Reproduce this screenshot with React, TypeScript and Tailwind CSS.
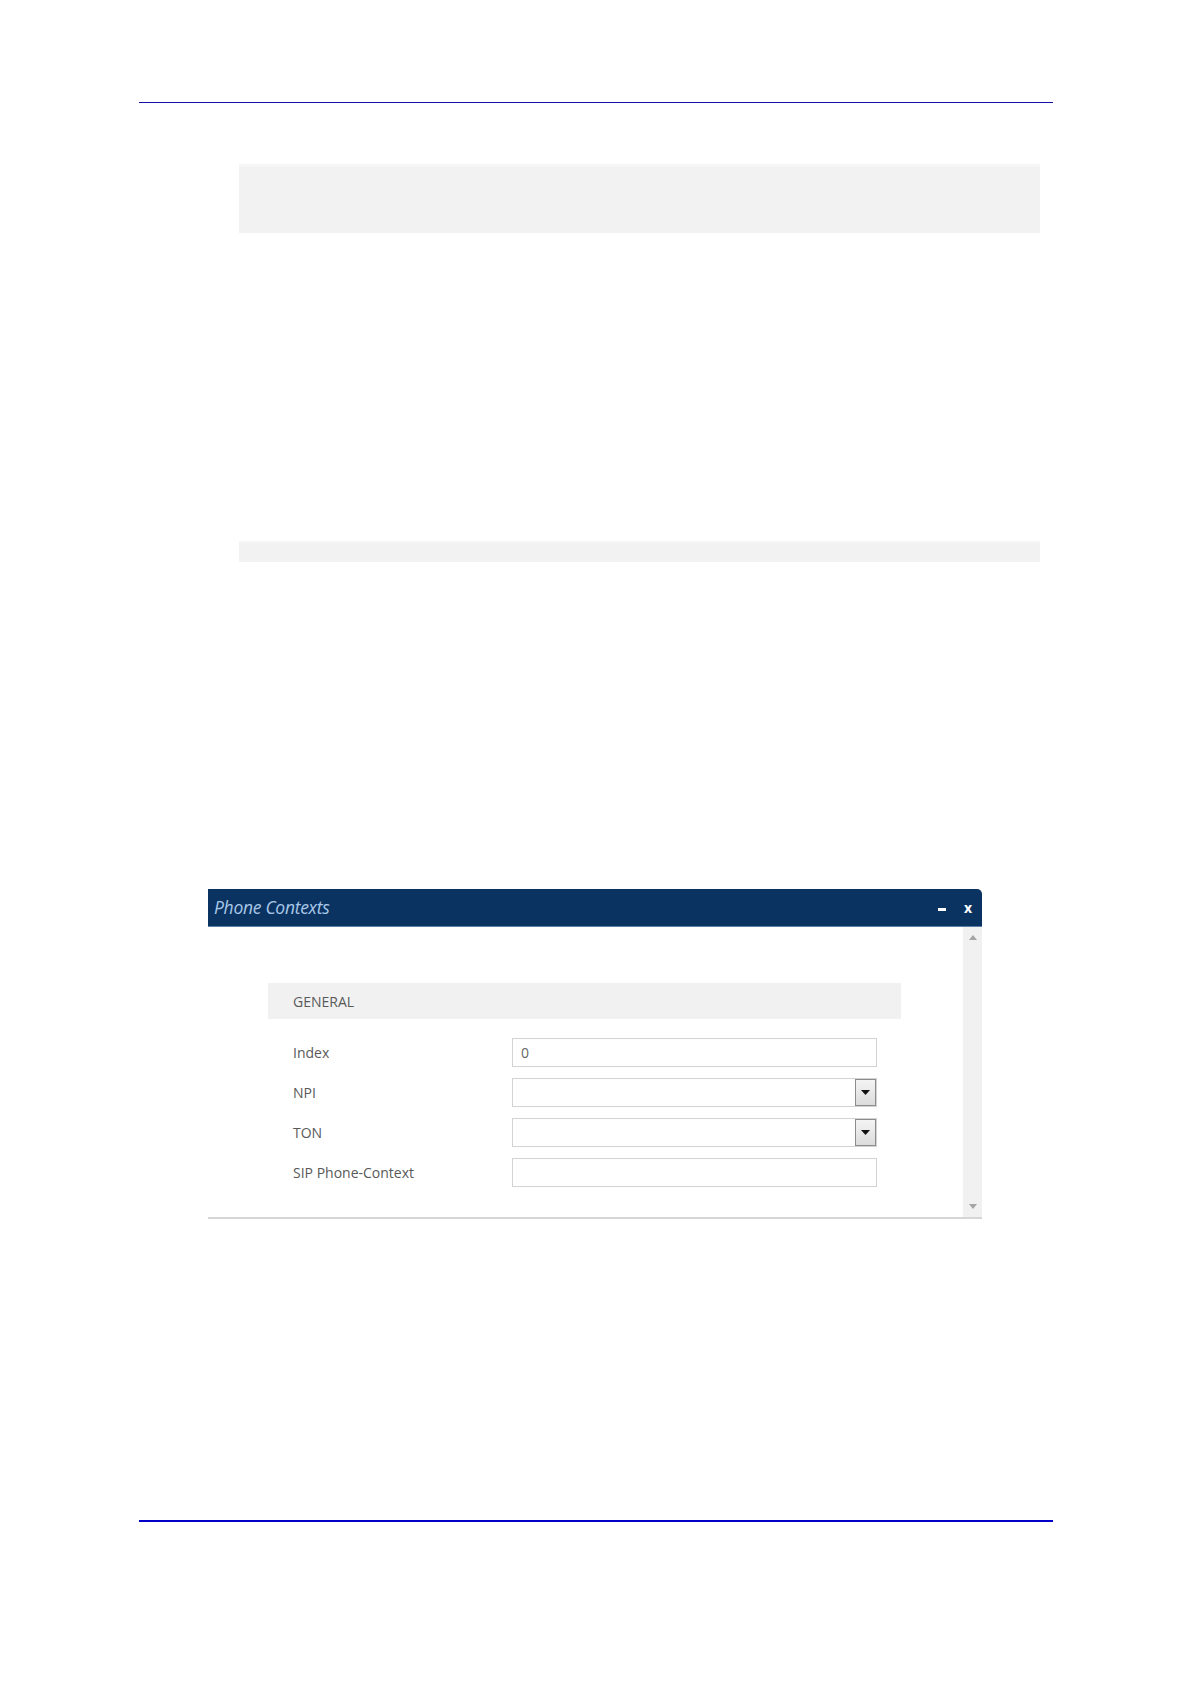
const font = { fontFamily: '"Open Sans", "Noto Sans", sans-serif' }

function Field({ label, value, select }: { label: string; value?: string; select?: boolean }) {
  return (
    <div className="flex items-center h-[29px]">
      <div className="w-[244px] text-[14px] text-[#595959] pl-[25px]">{label}</div>
      <div className="relative w-[365px] h-[29px] border border-[#d3d3d3] bg-white flex items-center">
        <span className="pl-[8px] text-[14px] text-[#666]">{value}</span>
        {select && (
          <div className="absolute right-0 top-0 bottom-0 w-[21px] border border-[#8c8c8c] bg-gradient-to-b from-[#f4f4f4] to-[#dcdcdc] flex items-center justify-center">
            <svg width="9" height="5" viewBox="0 0 9 5">
              <path d="M0 0 H9 L4.5 5 Z" fill="#111" />
            </svg>
          </div>
        )}
      </div>
    </div>
  )
}

export default function App() {
  return (
    <div className="min-h-[1683px] bg-white pt-[102px]" style={font}>
      <div className="ml-[139px] w-[914px]">
        <div className="h-px bg-[#1212a8]" />

        <div className="mt-[61px] ml-[100px] w-[801px] h-[69px] bg-[#f2f2f2] border-t-[3px] border-[#f6f6f6]" />

        <div className="mt-[308px] ml-[100px] w-[801px] h-[21px] bg-[#f2f2f2] border-t-[2px] border-[#f6f6f6]" />

        <div className="mt-[327px] ml-[69px] w-[774px]">
          <div className="h-[38px] bg-[#0b3361] rounded-tr-[5px] border-b border-[#5b7fa6] flex items-center justify-between pl-[6px] pr-[10px]">
            <span className="italic text-[17.5px] text-[#a9c8e8] tracking-[-0.3px]">Phone Contexts</span>
            <div className="flex items-center gap-[18px] text-white font-bold">
              <span className="block w-[8px] h-[3px] bg-white mt-[4px]" />
              <span className="text-[14px] leading-none">x</span>
            </div>
          </div>
          <div className="flex border-b-2 border-[#d6d6d6]">
            <div className="flex-1 pt-[56px] pb-[30px] pl-[60px]">
              <div className="w-[633px] h-[36px] bg-[#f1f1f1] flex items-center pl-[25px] text-[14px] text-[#595959]">
                GENERAL
              </div>
              <div className="mt-[19px] flex flex-col gap-[11px]">
                <Field label="Index" value="0" />
                <Field label="NPI" select />
                <Field label="TON" select />
                <Field label="SIP Phone-Context" />
              </div>
            </div>
            <div className="w-[19px] bg-[#f1f1f1] flex flex-col items-center justify-between py-[8px]">
              <svg width="8" height="5" viewBox="0 0 8 5">
                <path d="M0 5 L4 0 L8 5 Z" fill="#a5a5a5" />
              </svg>
              <svg width="8" height="5" viewBox="0 0 8 5">
                <path d="M0 0 H8 L4 5 Z" fill="#a5a5a5" />
              </svg>
            </div>
          </div>
        </div>

        <div className="mt-[301px] h-[2px] bg-[#0000c8]" />
      </div>
    </div>
  )
}
